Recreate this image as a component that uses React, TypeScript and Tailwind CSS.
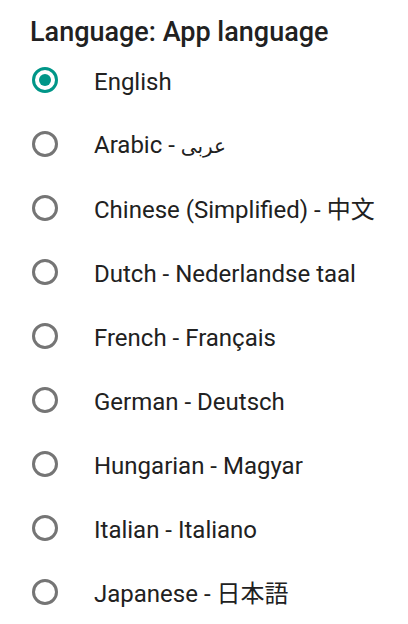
import { useState } from "react";

const languages = [
  { id: "en", label: "English" },
  { id: "ar", label: "Arabic - ", native: "عربى" },
  { id: "zh", label: "Chinese (Simplified) - 中文" },
  { id: "nl", label: "Dutch - Nederlandse taal" },
  { id: "fr", label: "French - Français" },
  { id: "de", label: "German - Deutsch" },
  { id: "hu", label: "Hungarian - Magyar" },
  { id: "it", label: "Italian - Italiano" },
  { id: "ja", label: "Japanese - 日本語" },
];

function Radio({ checked }: { checked: boolean }) {
  return (
    <span
      className={
        "flex h-[26px] w-[26px] shrink-0 items-center justify-center rounded-full border-[3px] " +
        (checked ? "border-[#009688]" : "border-[#757575]")
      }
    >
      {checked && <span className="h-[12px] w-[12px] rounded-full bg-[#009688]" />}
    </span>
  );
}

export default function App() {
  const [selected, setSelected] = useState("en");

  return (
    <div
      className="min-h-screen w-full bg-white pt-4 text-[#212121]"
      style={{ fontFamily: 'Roboto, "Noto Sans CJK SC", "DejaVu Sans", sans-serif' }}
    >
      <h1 className="h-8 pl-[30px] text-[27px] leading-8 font-medium">Language: App language</h1>
      <ul>
        {languages.map((lang) => (
          <li key={lang.id}>
            <button
              onClick={() => setSelected(lang.id)}
              className="flex h-16 w-full items-center pl-[32px] text-left"
            >
              <Radio checked={selected === lang.id} />
              <span
                className="ml-[36px] pt-[3px] text-[24px] leading-7"
                style={
                  lang.id === "ja"
                    ? { fontFamily: 'Roboto, "Noto Sans CJK JP", sans-serif' }
                    : undefined
                }
              >
                {lang.label}
                {lang.native && <span className="text-[20px]">{lang.native}</span>}
              </span>
            </button>
          </li>
        ))}
      </ul>
    </div>
  );
}
